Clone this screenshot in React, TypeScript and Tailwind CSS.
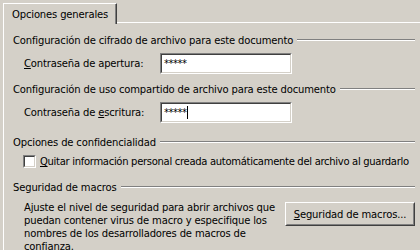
import React from "react";

const font = "font-['Tahoma','DejaVu_Sans',sans-serif]";

const GroupTitle = ({ children }: { children: React.ReactNode }) => (
  <div className="flex items-center h-[16px] pr-[5px]">
    <span className="whitespace-nowrap pr-[4px]">{children}</span>
    <div className="flex-1 border-t border-t-[#808080] border-b border-b-white" />
  </div>
);

const Sunken = ({ value, caret }: { value: string; caret?: boolean }) => (
  <div className="w-[132px] h-[21px] border border-t-[#808080] border-l-[#808080] border-b-white border-r-white">
    <div className="h-full border border-t-[#404040] border-l-[#404040] border-b-[#d4d0c8] border-r-[#d4d0c8] bg-white flex items-center pl-[2px] text-[10px] tracking-[-0.5px]">
      {value}
      {caret && <span className="w-px h-[13px] bg-black" />}
    </div>
  </div>
);

export default function App() {
  return (
    <div className={`w-[420px] h-[250px] bg-[#d4d0c8] text-black text-[10px] tracking-[-0.15px] overflow-hidden ${font}`}>
      <div className="flex items-end pl-[3px] pt-[3px]">
        <div className="h-[21px] px-[8px] pt-[3px] border-t border-l border-white border-r border-r-[#404040] shadow-[inset_-1px_0_0_#808080] bg-[#d4d0c8] relative z-10 -mb-px">
          Opciones generales
        </div>
        <div className="flex-1 border-b border-white" />
      </div>
      <div className="ml-[3px] border-l border-white h-full pl-[9px] pt-[9px]">
        <GroupTitle>Configuración de cifrado de archivo para este documento</GroupTitle>
        <div className="flex items-center mt-[5px] pl-[11px]">
          <span className="w-[136px]"><u>C</u>ontraseña de apertura:</span>
          <Sunken value="*****" />
        </div>
        <div className="mt-[7px]">
          <GroupTitle>Configuración de uso compartido de archivo para este documento</GroupTitle>
        </div>
        <div className="flex items-center mt-[5px] pl-[11px]">
          <span className="w-[136px]">Contraseña de <u>e</u>scritura:</span>
          <Sunken value="*****" caret />
        </div>
        <div className="mt-[11px]">
          <GroupTitle>Opciones de confidencialidad</GroupTitle>
        </div>
        <div className="flex items-center mt-[4px] pl-[10px] gap-[4px]">
          <div className="w-[13px] h-[13px] shrink-0 border border-t-[#808080] border-l-[#808080] border-b-white border-r-white">
            <div className="h-full border border-t-[#404040] border-l-[#404040] border-b-[#d4d0c8] border-r-[#d4d0c8] bg-white" />
          </div>
          <span className="whitespace-nowrap tracking-[-0.3px]"><u>Q</u>uitar información personal creada automáticamente del archivo al guardarlo</span>
        </div>
        <div className="mt-[10px]">
          <GroupTitle>Seguridad de macros</GroupTitle>
        </div>
        <div className="flex mt-[6px] pl-[11px] pr-[5px]">
          <p className="w-[260px] leading-[13px]">
            Ajuste el nivel de seguridad para abrir archivos que puedan contener virus de macro y especifique los nombres de los desarrolladores de macros de confianza.
          </p>
          <div className="ml-auto">
            <div className="mt-[1px] w-[130px] h-[24px] border border-t-white border-l-white border-b-[#404040] border-r-[#404040]">
              <div className="h-full border border-t-[#d4d0c8] border-l-[#d4d0c8] border-b-[#808080] border-r-[#808080] flex items-center justify-center">
                <span><u>S</u>eguridad de macros...</span>
              </div>
            </div>
          </div>
        </div>
      </div>
    </div>
  );
}
